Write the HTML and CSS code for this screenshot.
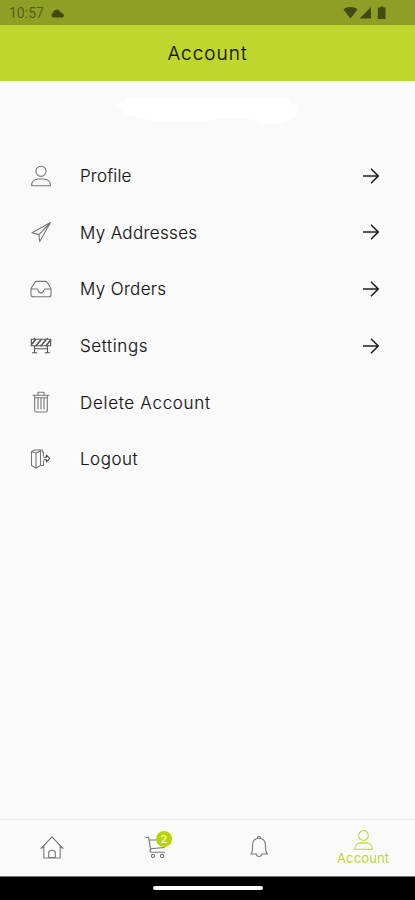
FILE: index.html
```html
<!DOCTYPE html>
<html lang="en">
<head>
<meta charset="utf-8">
<title>Account</title>
<link rel="stylesheet" href="styles.css">
</head>
<body>
<svg class="defs" width="0" height="0">
  <symbol id="person" viewBox="0 0 22 22"><circle cx="11" cy="6.3" r="5.1"/><path d="M1.6 20.7C1.6 16.4 4.6 14 8.500 14h5c3.900 0 6.900 2.400 6.900 6.700Z"/></symbol>
  <symbol id="arrow" viewBox="0 0 18 18"><path d="M1 9h15M9 1.800 16.200 9 9 16.200"/></symbol>
</svg>
<div class="screen">
  <div class="status">
    <span class="time">10:57</span>
    <svg class="cloud" width="14" height="9" viewBox="0 0 14 9"><path d="M2.500 8.400A2.200 2.200 0 0 1 2 4.100 3.800 3.800 0 0 1 9.300 3a2.700 2.700 0 0 1 2 1.600 2 2 0 0 1 .5 3.800Z"/></svg>
    <svg class="signals" width="46" height="14" viewBox="0 0 46 14"><path d="M.5 3.500C4.500.3 10.500.3 14.500 3.500L7.500 12.500ZM28 1v11.500H16.500ZM37.300 1.500V.5h3v1h2.200v11.500h-7.700V1.500Z"/></svg>
  </div>
  <header class="header">Account</header>
  <main class="content">
    <svg class="name-mask" width="182" height="28" viewBox="0 0 182 28"><path d="M8 1h164l2 5 6 2v9l-7 4-10 5h-20l-7-5H98l-7 2H36l-12-4-17-1-1-8-5-2V5h7Z"/></svg>
    <ul class="menu">
      <li><svg class="icon" viewBox="0 0 22 22"><use href="#person"/></svg><span class="label profile">Profile</span><svg class="arrow"><use href="#arrow"/></svg></li>
      <li><svg class="icon" viewBox="0 0 22 22"><path d="M20.500 1.500 9.700 20.500 9 13.600 2 11.700ZM20.500 1.500 9 13.600"/></svg><span class="label addresses">My Addresses</span><svg class="arrow"><use href="#arrow"/></svg></li>
      <li><svg class="icon" viewBox="0 0 22 22"><path d="M1 10.500 4.700 4.500Q5.300 3.400 6.700 3.400h8.600q1.400 0 2 1.100L21 10.500v6q0 2.300-2.300 2.300H3.300Q1 18.800 1 16.500ZM1 11h6.200c1 0 .7 4 3.800 4s2.800-4 3.800-4H21"/></svg><span class="label orders">My Orders</span><svg class="arrow"><use href="#arrow"/></svg></li>
      <li><svg class="icon dark" viewBox="0 0 22 22"><path d="M1.300 4.300h19.400v6.500H1.300ZM4.500 4.300v-1M17.500 4.300v-1M4.500 11v6.500M17.500 11v6.500M2.500 17.800h4.300M15.200 17.800h4.300M4.500 13.800h13"/><path class="stripe" d="m2 9 3.500-4.500M6 10.700l5-6M11 10.700l5-6M16 10.700l4.500-5.500"/></svg><span class="label settings">Settings</span><svg class="arrow"><use href="#arrow"/></svg></li>
      <li><svg class="icon" viewBox="0 0 22 22"><path d="M3 4.300h16M8 4V1.300h6V4M4.700 4.500v15q0 1.500 1.500 1.500h9.600q1.500 0 1.500-1.500v-15M8 7.500v10.200M11 7.500v10.200M14 7.500v10.200M4.700 6.700h12.600"/></svg><span class="label delete">Delete Account</span></li>
      <li><svg class="icon" viewBox="0 0 22 22"><path d="M1.500 3.500 5 2h7.500v2M1.500 3.500v14L6 20V5L1.500 3.500M6 5l4.500-2v14.500L6 20M10.500 17.500h3V13M13.500 8V4"/><path class="dark" d="M14 9.300h2.500V7l3 3.500-3 3.500v-2.300H14"/></svg><span class="label logout">Logout</span></li>
    </ul>
  </main>
  <nav class="tabs">
    <a><svg class="tab-icon" width="24" height="24" viewBox="0 0 24 24"><path d="M1 13.500 12 1.800l11 11.700M3.800 11v12h16.400V11M8.700 22.500v-5q0-2.300 3.300-2.300t3.300 2.300v5M8.700 22.500h6.600"/></svg></a>
    <a class="cart"><svg class="tab-icon" width="24" height="24" viewBox="0 0 24 24"><path d="M2 2.500h2.700l1.800 11.500M5 5h17l-2 7.500-13.400 1.300M6.700 14q-2 3.200 1 3.200h12.800"/><circle cx="9" cy="21" r="1.600"/><circle cx="18" cy="21" r="1.600"/></svg><span class="badge">2</span></a>
    <a><svg class="tab-icon" width="22" height="24" viewBox="0 0 22 24"><path d="M9.500 3a1.500 1.500 0 1 1 3 0M3 19c1.800-2 1.500-4 1.500-8.500C4.500 5.500 7 3.300 11 3.300s6.500 2.200 6.500 7.200c0 4.500-.3 6.500 2 8.500H13.700M3 19h5.300M8.300 19.500a2.800 2.800 0 0 0 5.400 0"/></svg></a>
    <a class="active"><svg class="tab-icon" width="21" height="22" viewBox="0 0 22 22"><use href="#person"/></svg><span>Account</span></a>
  </nav>
  <footer class="system"><span class="handle"></span></footer>
</div>
</body>
</html>
```
FILE: styles.css
```css
* { box-sizing: border-box; }
body { margin: 0; }
.defs { position: absolute; }
.screen {
  width: 415px; height: 900px;
  display: flex; flex-direction: column;
  background: #fafafa; color: #151515;
  font-family: Inter, "Liberation Sans", sans-serif;
  overflow: hidden;
}
.status {
  height: 25px; flex: none; padding: 1px 26px 0 9px;
  display: flex; align-items: center;
  background: #8f9f26; color: #56621a;
  font: 14px Roboto, sans-serif;
}
.status svg { fill: #414a10; }
.cloud { margin-left: 7px; }
.signals { margin-left: auto; }
.header {
  height: 56px; flex: none;
  display: flex; align-items: center; justify-content: center;
  background: #bfd62f; font-size: 19px; font-weight: 300; letter-spacing: 1px;
  -webkit-text-stroke: .2px;
}
.content { flex: 1; }
.name-mask { display: block; margin: 17px auto 0 117px; fill: #fff; }
.menu { list-style: none; margin: 21.500px 0 0; padding: 0 35px 0 30px; }
.menu li { height: 56.600px; display: flex; align-items: center; }
.icon { width: 22px; height: 22px; margin-right: 28px; }
.icon, .tab-icon { fill: none; stroke: #777; stroke-width: 1.100; stroke-linejoin: round; stroke-linecap: round; flex: none; }
.icon.dark { stroke: #555; }
.dark { stroke: #444; }
.stripe { stroke-width: 1.600; }
.label { font-size: 17px; font-weight: 300; padding-top: 1px; -webkit-text-stroke: .15px; }
.arrow { width: 18px; height: 18px; margin-left: auto; fill: none; stroke: #222; stroke-width: 1.600; }
.profile { letter-spacing: .2px; }
.addresses { letter-spacing: .35px; }
.orders { letter-spacing: .35px; }
.settings { letter-spacing: .6px; }
.delete { letter-spacing: .7px; }
.logout { letter-spacing: .5px; }
.tabs {
  height: 57px; flex: none; padding-bottom: 2px;
  display: grid; grid-template-columns: repeat(4, 1fr);
  border-top: 1px solid #ededed;
}
.tabs a { display: flex; flex-direction: column; align-items: center; justify-content: center; position: relative; }
.badge {
  position: absolute; left: 52px; top: 11px; width: 16px; height: 16px;
  border-radius: 50%; background: #b9d500; color: #fff;
  font-size: 11px; line-height: 16px; text-align: center;
}
.active { color: #bfd62f; font-size: 13px; line-height: 14px; letter-spacing: .15px; }
.active .tab-icon { stroke: #bfd62f; }
.system {
  height: 24px; flex: none; background: #000; border-top: 1px solid #777;
  display: flex; align-items: center; justify-content: center; padding-bottom: 1px;
}
.handle { width: 110px; height: 4px; border-radius: 2px; background: #fff; }
```
